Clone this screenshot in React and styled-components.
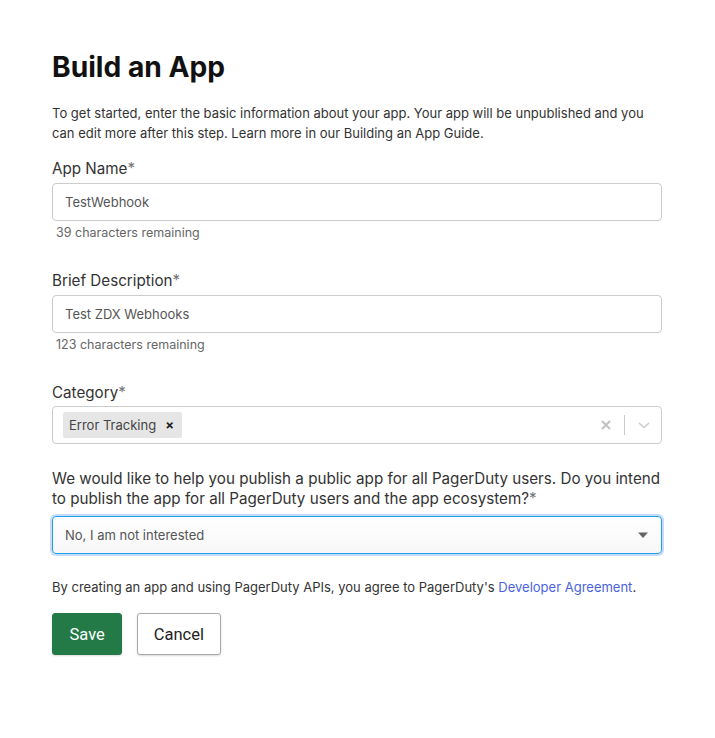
import React from 'react'
import styled, { createGlobalStyle } from 'styled-components'

const Global = createGlobalStyle`
  body {
    margin: 0;
    background: #fff;
    font-family: Inter, "Noto Sans", sans-serif;
    color: #222;
  }
`

const Page = styled.div`
  width: 610px;
  padding: 49px 0 80px 52px;
`

const Title = styled.h1`
  margin: 0;
  font-size: 28.2px;
  line-height: 36px;
  font-weight: 700;
  color: #111;
`

const Intro = styled.p`
  margin: 18px 0 0;
  font-size: 13px;
  line-height: 20px;
  color: #333;
`

const Field = styled.div`
  margin-top: ${(p) => p.$top || 16}px;
  display: flex;
  flex-direction: column;
`

const Label = styled.label`
  font-size: 15.2px;
  line-height: 20px;
  color: #333;
  margin-bottom: ${(p) => p.$gap || 4}px;

  span {
    color: #777;
  }
`

const Box = styled.div`
  box-sizing: border-box;
  height: 38px;
  display: flex;
  align-items: center;
  border: 1px solid ${(p) => (p.$focus ? '#1fa0ea' : '#ccc')};
  border-radius: 4px;
  padding: ${(p) => p.$pad || '0 12px'};
  font-size: 13px;
  color: #555;
  background: ${(p) => (p.$focus ? 'linear-gradient(#fff, #f7f7f7)' : '#fff')};
  box-shadow: ${(p) => (p.$focus ? '0 0 0 2px #c4dcf8' : 'none')};
`

const Helper = styled.div`
  margin-top: 4px;
  padding-left: 4px;
  font-size: 12.5px;
  line-height: 16px;
  color: #666;
`

const Chip = styled.div`
  display: flex;
  align-items: center;
  gap: 6px;
  height: 26px;
  padding: 0 5px 0 6px;
  background: #e6e6e6;
  border-radius: 2px;
  color: #444;
  font-size: 13px;
`

const ChipX = styled.span`
  font-size: 13px;
  font-weight: 700;
  color: #222;
  padding: 0 3px;
`

const Grow = styled.div`
  flex: 1;
`

const Controls = styled.div`
  display: flex;
  align-items: center;
  height: 100%;
`

const Sep = styled.div`
  width: 1px;
  height: 20px;
  background: #ccc;
  margin: 0 12px;
`

const Agreement = styled.p`
  margin: 23px 0 0;
  font-size: 13px;
  line-height: 20px;
  color: #333;

  a {
    color: #4b63e0;
    text-decoration: none;
  }
`

const Actions = styled.div`
  display: flex;
  gap: 15px;
  margin-top: 16px;
`

const Button = styled.button`
  box-sizing: border-box;
  height: 42px;
  padding: 0 ${(p) => (p.$primary ? 16.5 : 15.5)}px;
  border-radius: 3px;
  font-family: Roboto, "Liberation Sans", sans-serif;
  font-size: 16.5px;
  border: 1px solid ${(p) => (p.$primary ? '#237a46' : '#aaa')};
  background: ${(p) => (p.$primary ? '#237a46' : '#fff')};
  color: ${(p) => (p.$primary ? '#fff' : '#222')};
  box-shadow: 0 1px 2px rgba(0, 0, 0, 0.15);
`

const Clear = () => (
  <svg width="12" height="12" viewBox="0 0 12 12">
    <path d="M2 2 L10 10 M10 2 L2 10" stroke="#c2c2c2" strokeWidth="2" />
  </svg>
)

const Chevron = () => (
  <svg width="14" height="10" viewBox="0 0 14 10">
    <path d="M2 3 L7 7.5 L12 3" fill="none" stroke="#ccc" strokeWidth="1.6" />
  </svg>
)

const Caret = () => (
  <svg width="12" height="8" viewBox="0 0 12 8">
    <path d="M1 1.5 H11 L6 7 Z" fill="#666" />
  </svg>
)

export default function App() {
  return (
    <Page>
      <Global />
      <Title>Build an App</Title>
      <Intro>
        To get started, enter the basic information about your app. Your app will be unpublished and you
        can edit more after this step. Learn more in our Building an App Guide.
      </Intro>

      <Field $top={16}>
        <Label>
          App Name<span>*</span>
        </Label>
        <Box>TestWebhook</Box>
        <Helper>39 characters remaining</Helper>
      </Field>

      <Field $top={30}>
        <Label>
          Brief Description<span>*</span>
        </Label>
        <Box>Test ZDX Webhooks</Box>
        <Helper>123 characters remaining</Helper>
      </Field>

      <Field $top={30}>
        <Label $gap={3}>
          Category<span>*</span>
        </Label>
        <Box $pad="0 10px 0 10px">
          <Chip>
            Error Tracking
            <ChipX>×</ChipX>
          </Chip>
          <Grow />
          <Controls>
            <Clear />
            <Sep />
            <Chevron />
          </Controls>
        </Box>
      </Field>

      <Field $top={25}>
        <Label $gap={7}>
          We would like to help you publish a public app for all PagerDuty users. Do you intend to publish
          the app for all PagerDuty users and the app ecosystem?<span>*</span>
        </Label>
        <Box $focus>
          <Grow>No, I am not interested</Grow>
          <Caret />
        </Box>
      </Field>

      <Agreement>
        By creating an app and using PagerDuty APIs, you agree to PagerDuty's{' '}
        <a href="#">Developer Agreement</a>.
      </Agreement>

      <Actions>
        <Button $primary>Save</Button>
        <Button>Cancel</Button>
      </Actions>
    </Page>
  )
}
